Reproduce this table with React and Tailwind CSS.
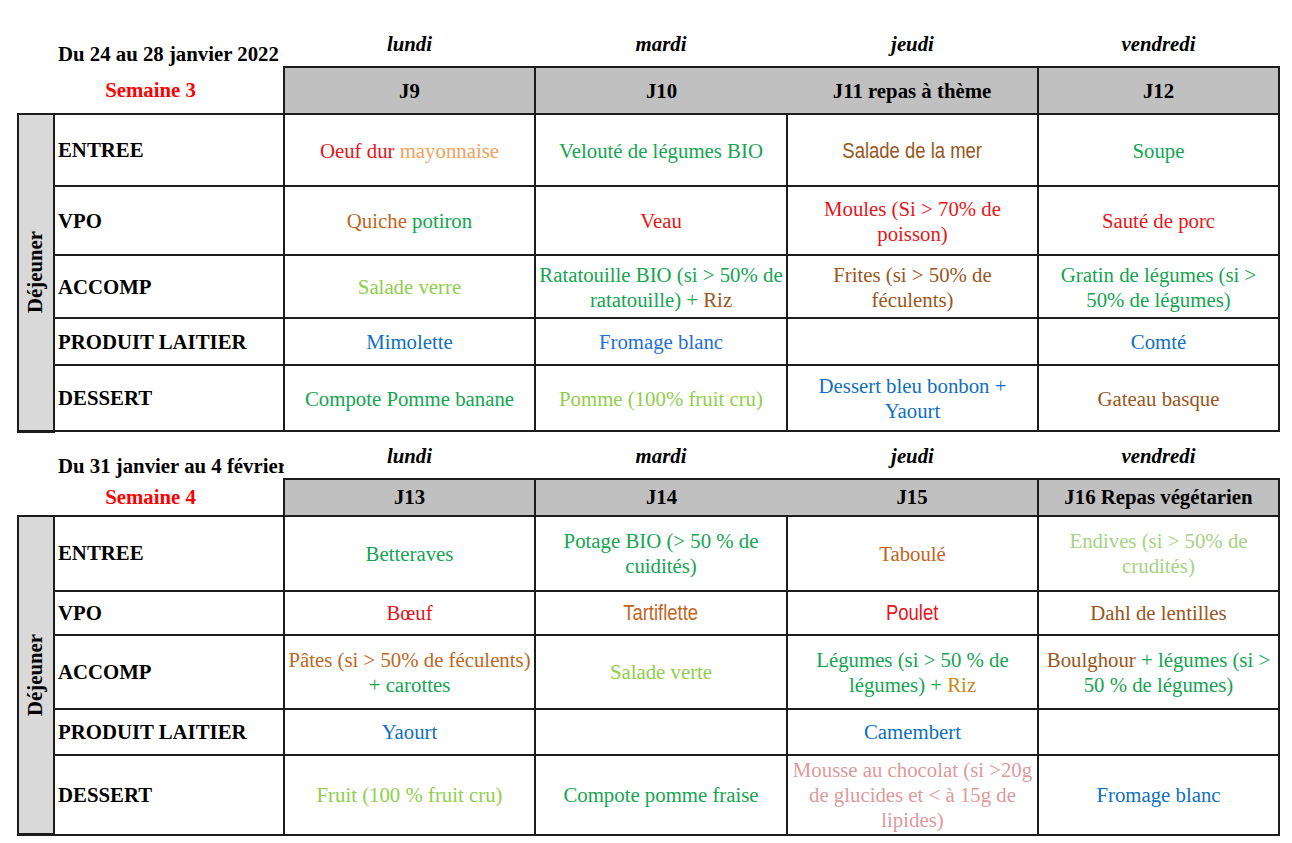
import React from "react";

// couleurs du menu
const RED = "text-[#e8141b]";
const ORANGE = "text-[#f4a15c]";
const GREEN = "text-[#14a550]";
const LIGHT = "text-[#8fce4c]";
const PALE = "text-[#a6d283]";
const BROWN = "text-[#c0651d]";
const DARK = "text-[#9a561c]";
const GOLD = "text-[#c98a1a]";
const BLUE = "text-[#0f6fc0]";
const BRIGHT = "text-[#1f6fe0]";
const PINK = "text-[#de9a9a]";
// police étroite façon Arial Narrow
const NARROW = "inline-block origin-center scale-x-[0.84] text-[22px] font-['Liberation_Sans',Arial,sans-serif]";

const LABELS = ["ENTREE", "VPO", "ACCOMP", "PRODUIT LAITIER", "DESSERT"];
const DAYS = ["lundi", "mardi", "jeudi", "vendredi"];

const weeks = [
  {
    title: "Du 24 au 28 janvier 2022",
    semaine: "Semaine 3",
    dayRow: "h-[67px]",
    header: "h-[47px]",
    heads: ["J9", "J10", "J11 repas à thème", "J12"],
    heights: ["h-[72px]", "h-[69px]", "h-[63px]", "h-[47px]", "h-[66px]"],
    rows: [
      [
        [[["Oeuf dur ", RED], ["mayonnaise", ORANGE]]],
        [[["Velouté de légumes BIO", GREEN]]],
        [[["Salade de la mer", DARK, NARROW]]],
        [[["Soupe", GREEN]]],
      ],
      [
        [[["Quiche ", BROWN], ["potiron", GREEN]]],
        [[["Veau", RED]]],
        [[["Moules (Si > 70% de", RED]], [["poisson)", RED]]],
        [[["Sauté de porc", RED]]],
      ],
      [
        [[["Salade verre", LIGHT]]],
        [[["Ratatouille BIO (si > 50% de", GREEN]], [["ratatouille) + ", GREEN], ["Riz", DARK]]],
        [[["Frites (si > 50% de", DARK]], [["féculents)", DARK]]],
        [[["Gratin de légumes (si >", GREEN]], [["50% de légumes)", GREEN]]],
      ],
      [
        [[["Mimolette", BLUE]]],
        [[["Fromage blanc", BRIGHT]]],
        [],
        [[["Comté", BLUE]]],
      ],
      [
        [[["Compote Pomme banane", GREEN]]],
        [[["Pomme (100% fruit cru)", LIGHT]]],
        [[["Dessert bleu bonbon +", BLUE]], [["Yaourt", BLUE]]],
        [[["Gateau basque", DARK]]],
      ],
    ],
  },
  {
    title: "Du 31 janvier au 4 février 2022",
    semaine: "Semaine 4",
    dayRow: "h-[46px]",
    header: "h-[37px]",
    heads: ["J13", "J14", "J15", "J16 Repas végétarien"],
    heights: ["h-[75px]", "h-[44px]", "h-[74px]", "h-[46px]", "h-[80px]"],
    rows: [
      [
        [[["Betteraves", GREEN]]],
        [[["Potage BIO (> 50 % de", GREEN]], [["cuidités)", GREEN]]],
        [[["Taboulé", BROWN]]],
        [[["Endives (si > 50% de", PALE]], [["crudités)", PALE]]],
      ],
      [
        [[["Bœuf", RED]]],
        [[["Tartiflette", BROWN, NARROW]]],
        [[["Poulet", RED, NARROW]]],
        [[["Dahl de lentilles", DARK]]],
      ],
      [
        [[["Pâtes (si > 50% de féculents)", BROWN]], [["+ carottes", GREEN]]],
        [[["Salade verte", LIGHT]]],
        [[["Légumes (si > 50 % de", GREEN]], [["légumes) + ", GREEN], ["Riz", GOLD]]],
        [[["Boulghour ", DARK], ["+ légumes (si >", GREEN]], [["50 % de légumes)", GREEN]]],
      ],
      [
        [[["Yaourt", BLUE]]],
        [],
        [[["Camembert", BLUE]]],
        [],
      ],
      [
        [[["Fruit (100 % fruit cru)", LIGHT]]],
        [[["Compote pomme fraise", GREEN]]],
        [
          [["Mousse au chocolat (si >20g", PINK]],
          [["de glucides et < à 15g de", PINK]],
          [["lipides)", PINK]],
        ],
        [[["Fromage blanc", BLUE]]],
      ],
    ],
  },
];

const Cell = ({ lines }) => (
  <div className="leading-[25px]">
    {lines.map((line, i) => (
      <div key={i} className="whitespace-nowrap">
        {line.map(([text, color, font], j) => (
          <span key={j} className={`${color} ${font || ""}`}>
            {text}
          </span>
        ))}
      </div>
    ))}
  </div>
);

const Week = ({ week }) => (
  <table className="ml-[17px] w-[1261px] table-fixed border-collapse">
    <colgroup>
      <col className="w-[36px]" />
      <col className="w-[230px]" />
      <col className="w-[251px]" />
      <col className="w-[252px]" />
      <col className="w-[251px]" />
      <col className="w-[241px]" />
    </colgroup>
    <tbody>
      <tr className={week.dayRow}>
        <td />
        <td className="pl-[4px] pb-[1px] align-bottom">
          <div className="overflow-hidden whitespace-nowrap font-bold leading-[24px]">{week.title}</div>
        </td>
        {DAYS.map((d) => (
          <td key={d} className="pb-[10px] text-center align-bottom font-bold italic leading-[25px]">
            {d}
          </td>
        ))}
      </tr>
      <tr className={week.header}>
        <td colSpan={2} className="text-center font-bold text-[#ff0000]">
          {week.semaine}
        </td>
        {week.heads.map((h, i) => (
          <td
            key={h}
            className={`border-2 border-[#1c1c1c] bg-[#c0c0c0] text-center font-bold ${i === 1 ? "border-r-0" : ""} ${
              i === 2 ? "border-l-0" : ""
            }`}
          >
            {h}
          </td>
        ))}
      </tr>
      {week.rows.map((row, r) => (
        <tr key={r} className={week.heights[r]}>
          {r === 0 && (
            <td rowSpan={5} className="border-2 border-b-[3px] border-[#1c1c1c] bg-[#d9d9d9] p-0">
              <div className="mx-auto rotate-180 text-center font-bold [writing-mode:vertical-rl]">Déjeuner</div>
            </td>
          )}
          <td className="border-2 border-[#1c1c1c] pl-[3px] font-bold">{LABELS[r]}</td>
          {row.map((lines, c) => (
            <td key={c} className="border-2 border-[#1c1c1c] p-0 text-center">
              <Cell lines={lines} />
            </td>
          ))}
        </tr>
      ))}
    </tbody>
  </table>
);

export default function App() {
  return (
    <div className="h-[843px] w-[1292px] bg-white font-['Liberation_Serif','Times_New_Roman',serif] text-[20.8px] text-black">
      {weeks.map((w) => (
        <Week key={w.semaine} week={w} />
      ))}
    </div>
  );
}
